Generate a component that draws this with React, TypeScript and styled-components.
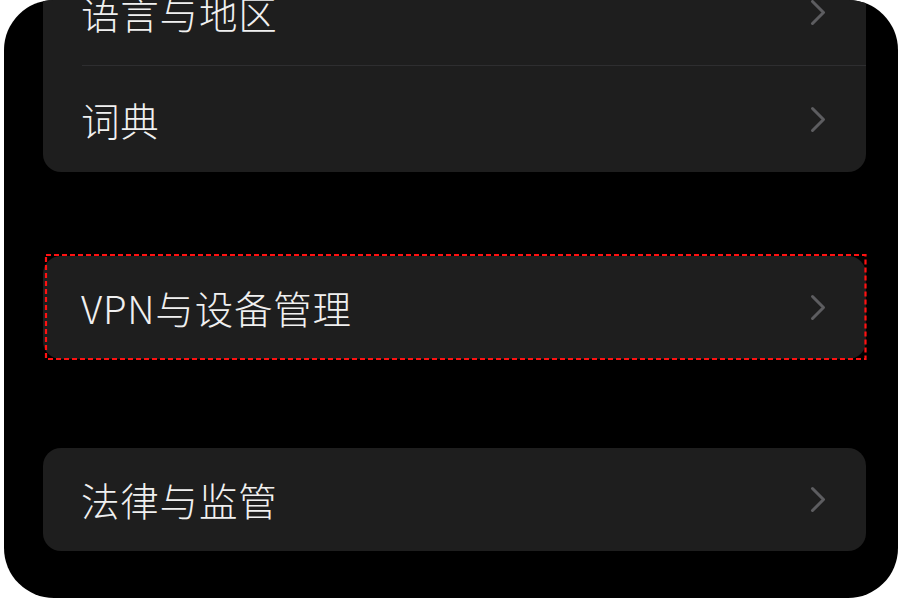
import React from "react"
import styled, {createGlobalStyle} from "styled-components"

const GlobalStyle = createGlobalStyle`
  html, body {
    margin: 0;
    padding: 0;
    background: #ffffff;
  }
  body {
    font-family: "Noto Sans CJK SC", "Noto Sans", sans-serif;
  }
`;

const Phone = styled.div`
  margin: 0 2px 2px 4px;
  height: 598px;
  background: #000000;
  border-radius: 50px;
  overflow: hidden;
  padding: 0 32px 0 39px;
  box-sizing: border-box;
`;

const List = styled.div`
  display: flex;
  flex-direction: column;
  margin-top: -40px;
`;

const Card = styled.div<{ $gap?: number }>`
  position: relative;
  background: #1e1e1e;
  border-radius: 18px;
  margin-top: ${p => p.$gap ?? 0}px;
`;

const Row = styled.div<{ $h?: number }>`
  height: ${p => p.$h ?? 105}px;
  display: flex;
  align-items: center;
  justify-content: space-between;
  padding: 0 40px 0 38px;
  box-sizing: border-box;
`;

const Label = styled.span`
  color: #f0f0f0;
  font-size: 38.5px;
  font-weight: 300;
  line-height: 1;
  letter-spacing: 0.8px;
`;

const Divider = styled.div`
  height: 1px;
  margin-left: 39px;
  background: #2e2e30;
`;

const Highlight = styled.svg`
  position: absolute;
  left: 3px;
  top: -1px;
  width: calc(100% - 3.5px);
  height: calc(100% + 1px);
  overflow: visible;
  pointer-events: none;
`;

function Chevron() {
    return (
        <svg width="16" height="27" viewBox="0 0 16 27">
            <polyline points="2.5,2.5 13.5,13.5 2.5,24.5" fill="none" stroke="#5d5d60"
                      strokeWidth="3" strokeLinecap="round" strokeLinejoin="round"/>
        </svg>
    )
}

function Item({label, h}: { label: string, h?: number }) {
    return (
        <Row $h={h}>
            <Label>{label}</Label>
            <Chevron/>
        </Row>
    )
}

export default function App() {
    return (
        <>
            <GlobalStyle/>
            <Phone>
                <List>
                    <Card>
                        <Item label="语言与地区"/>
                        <Divider/>
                        <Item label="词典" h={106}/>
                    </Card>
                    <Card $gap={84}>
                        <Item label="VPN与设备管理" h={103}/>
                        <Highlight preserveAspectRatio="none">
                            <rect x="0" y="0" width="100%" height="100%" fill="none"
                                  stroke="#ff1111" strokeWidth="2.2" strokeDasharray="5 3"/>
                        </Highlight>
                    </Card>
                    <Card $gap={89}>
                        <Item label="法律与监管" h={103}/>
                    </Card>
                </List>
            </Phone>
        </>
    )
}
